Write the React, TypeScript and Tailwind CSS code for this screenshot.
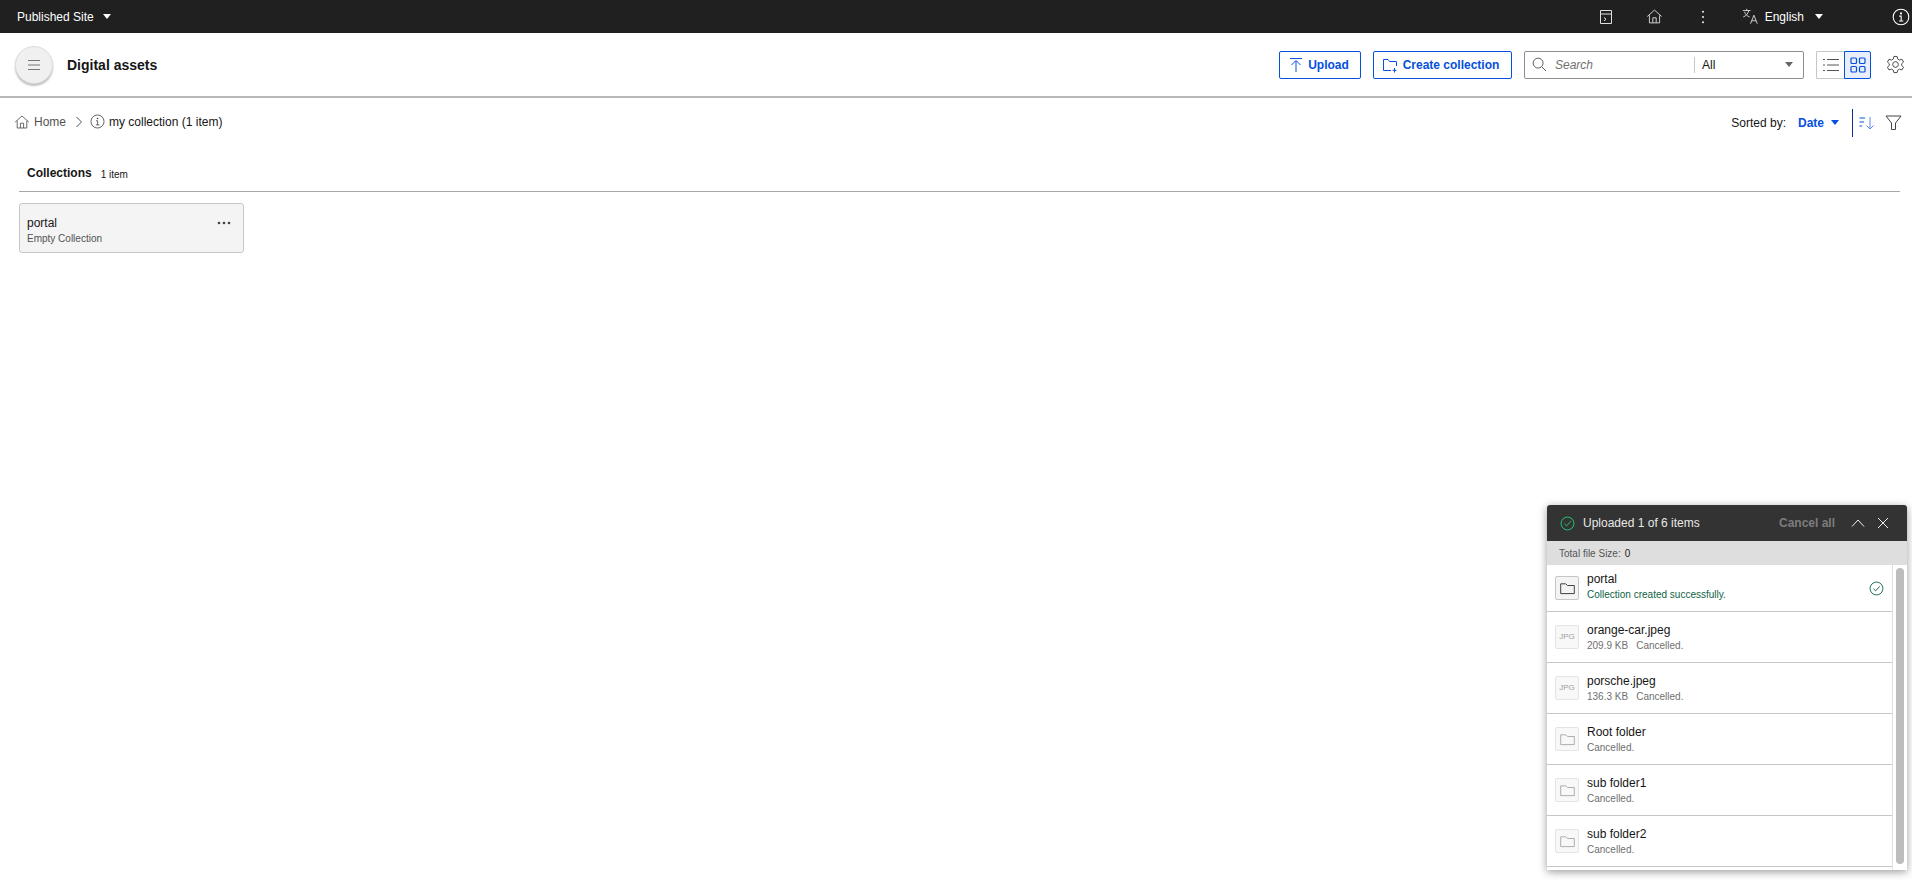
import React from "react";

const I = ({ className, children, box = "0 0 20 20", sw = 1 }: { className: string; children: React.ReactNode; box?: string; sw?: number }) => (
  <svg viewBox={box} className={className} fill="none" stroke="currentColor" strokeWidth={sw}>
    {children}
  </svg>
);

const HomeIcon = ({ className }: { className: string }) => (
  <I className={className}>
    <path d="M1.5 10 10 2.5 18.5 10M4 8.5V17.5H16V8.5M8 17.5V11.5H12V17.5" strokeLinejoin="round" />
  </I>
);
const InfoIcon = ({ className, sw = 1 }: { className: string; sw?: number }) => (
  <I className={className} sw={sw}>
    <circle cx="10" cy="10" r="8.7" />
    <path d="M8 9H10.2V14.5M7.8 14.5H12.5" />
    <circle cx="10" cy="6" r="0.6" fill="currentColor" />
  </I>
);
const Caret = ({ className }: { className: string }) => (
  <svg viewBox="0 0 8 5" className={className} fill="currentColor">
    <path d="M0 0H8L4 5Z" />
  </svg>
);
const Check = ({ className }: { className: string }) => (
  <I className={className} sw={1.2}>
    <circle cx="10" cy="10" r="8.6" />
    <path d="M5.8 10.3 8.8 13.2 14.4 7" />
  </I>
);
const Folder = ({ className }: { className: string }) => (
  <I className={className}>
    <path d="M2 4.5H8L10 6.5H18V16H2Z" strokeLinejoin="round" />
  </I>
);

const rows = [
  { name: "orange-car.jpeg", size: "209.9 KB", jpg: true },
  { name: "porsche.jpeg", size: "136.3 KB", jpg: true },
  { name: "Root folder" },
  { name: "sub folder1" },
  { name: "sub folder2" },
];

export default function App() {
  return (
    <div className="relative h-[882px] w-full overflow-hidden bg-white font-['Liberation_Sans',Arial,sans-serif] text-[#161616]">
      <header className="flex h-[33px] items-center bg-[#202020] pl-[17px] text-xs text-white">
        <span>Published Site</span>
        <Caret className="ml-[9px] h-[5px] w-[8px]" />
        <div className="ml-auto flex items-center">
          <I className="h-4 w-4 text-[#e0e0e0]" box="0 0 16 16">
            <path d="M2.5 1.5H13.5V14.5H2.5ZM2.5 5H13.5M6 8.5 8 10.2 6 12" />
          </I>
          <HomeIcon className="ml-[32px] h-[17px] w-[17px] text-[#e8e8e8]" />
          <svg viewBox="0 0 4 16" className="ml-[38px] h-[14px] w-[4px]" fill="#e8e8e8">
            <circle cx="2" cy="2" r="1.2" />
            <circle cx="2" cy="8" r="1.2" />
            <circle cx="2" cy="14" r="1.2" />
          </svg>
          <I className="ml-[37px] h-[17px] w-[17px] text-[#e8e8e8]" box="0 0 20 20" sw={1}>
            <path d="M1 3H10M5.5 1V3M8 3C7 7 4.500 9.500 1.500 10.500M3 4.500C4 7.500 6 9.500 9 10.500M10 18.500 14 8.500 18 18.500M11.500 15H16.500" />
          </I>
          <span className="ml-[6px]">English</span>
          <Caret className="ml-[11px] h-[5px] w-[8px]" />
          <InfoIcon className="mr-[2px] ml-[69px] h-[18px] w-[18px] text-white" sw={1.2} />
        </div>
      </header>

      <div className="flex h-[65px] items-center border-b-2 border-[#b8b8b8] pr-[7px] pl-[15px]">
        <button className="flex h-[38px] w-[38px] items-center justify-center rounded-full border border-[#dcdcdc] bg-[#f0f0f0] shadow-[0_2px_2px_rgba(0,0,0,0.25)]">
          <I className="h-[14px] w-[14px] text-[#777]" box="0 0 14 14">
            <path d="M1 2.500H13M1 7H13M1 11.500H13" />
          </I>
        </button>
        <h1 className="ml-[14px] text-sm font-bold">Digital assets</h1>
        <div className="ml-auto flex items-center">
          <button className="flex h-[28px] w-[82px] items-center justify-center gap-[5px] rounded-[2px] border border-[#0550dc] pr-[2px] text-xs font-bold text-[#0550dc]">
            <I className="h-[16px] w-[14px]" box="0 0 14 16">
              <path d="M1 1.500H13M7 15V4M2.500 8 7 3.500 11.500 8" />
            </I>
            Upload
          </button>
          <button className="ml-[12px] flex h-[28px] w-[139px] items-center justify-center gap-[5px] rounded-[2px] border border-[#0550dc] pr-[4px] text-xs font-bold text-[#0550dc]">
            <I className="h-[16px] w-[16px]" box="0 0 16 16">
              <path d="M9 13.500H1.500V2.500H6L7.500 4.500H14.500V9M12.500 11V15.500M10.500 13.300H14.500" />
            </I>
            Create collection
          </button>
          <div className="ml-[12px] flex h-[28px] w-[280px] items-center rounded-[2px] border border-[#8d8d8d] pr-[10px] pl-[7px]">
            <I className="h-[15px] w-[15px] text-[#555]" box="0 0 16 16">
              <circle cx="6.500" cy="6.500" r="5.300" />
              <path d="M10.500 10.500 15 15" />
            </I>
            <span className="ml-[8px] w-[139px] text-xs text-[#6f6f6f] italic">Search</span>
            <div className="h-[16px] w-px bg-[#c6c6c6]" />
            <span className="mt-[1px] ml-[7px] text-xs">All</span>
            <Caret className="ml-auto h-[5px] w-[8px] text-[#666]" />
          </div>
          <div className="ml-[12px] flex h-[28px] w-[55px]">
            <button className="flex w-[28px] items-center justify-center rounded-l-[2px] border border-r-0 border-[#c6c6c6]">
              <I className="h-[14px] w-[16px] text-[#555]" box="0 0 16 14">
                <path d="M4 1.500H16M4 7H16M4 12.500H16M0 1.500H2M0 7H2M0 12.500H2" />
              </I>
            </button>
            <button className="flex w-[27px] items-center justify-center rounded-r-[2px] border border-[#0550dc] bg-[#e8eefb]">
              <I className="h-[16px] w-[16px] text-[#0550dc]" box="0 0 16 16" sw={1.2}>
                <rect x="1" y="1" width="5.500" height="5.500" rx="1" />
                <rect x="9.500" y="1" width="5.500" height="5.500" rx="1" />
                <rect x="1" y="9.500" width="5.500" height="5.500" rx="1" />
                <rect x="9.500" y="9.500" width="5.500" height="5.500" rx="1" />
              </I>
            </button>
          </div>
          <I className="ml-[15px] h-[19px] w-[19px] text-[#444]">
            <path d="M8.300 1.500H11.700L12.300 4.200 14.200 5.300 16.800 4.500 18.500 7.400 16.500 9.200V11L18.500 12.800 16.800 15.700 14.200 14.900 12.300 16 11.700 18.500H8.300L7.700 16 5.800 14.900 3.200 15.700 1.500 12.800 3.500 11V9.200L1.500 7.400 3.200 4.500 5.800 5.300 7.700 4.200Z" strokeLinejoin="round" />
            <circle cx="10" cy="10" r="3" />
          </I>
        </div>
      </div>

      <div className="flex h-[43px] items-center pt-[4px] pr-[10px] pl-[14px] text-xs">
        <HomeIcon className="h-[16px] w-[16px] text-[#444]" />
        <span className="ml-[4px] text-[#525252]">Home</span>
        <I className="ml-[9px] h-[12px] w-[8px] text-[#555]" box="0 0 8 12">
          <path d="M1.500 1 6.500 6 1.500 11" />
        </I>
        <InfoIcon className="ml-[7px] h-[15px] w-[15px] text-[#333]" />
        <span className="ml-[4px]">my collection (1 item)</span>
        <div className="mt-[2px] ml-auto flex items-center">
          <span>Sorted by:</span>
          <span className="ml-[12px] font-bold text-[#0550dc]">Date</span>
          <Caret className="ml-[7px] h-[5px] w-[8px] text-[#0550dc]" />
          <div className="ml-[13px] h-[28px] w-px bg-[#0f2a9c]" />
          <I className="ml-[6px] h-[14px] w-[16px] text-[#0550dc]" box="0 0 16 14">
            <path d="M0.500 2H6M0.500 6H5M0.500 10H3" />
            <path d="M11 1V13M7.500 9.500 11 13 14.500 9.500" stroke="#5b8def" />
          </I>
          <I className="ml-[10px] h-[17px] w-[17px] text-[#444]" box="0 0 17 17">
            <path d="M1 2H16L10.500 9V15.500H6.500V9Z" strokeLinejoin="round" />
          </I>
        </div>
      </div>

      <section className="mt-[24px] mr-[12px] ml-[19px]">
        <div className="flex h-[27px] items-start border-b border-[#a8a8a8] pl-[8px]">
          <span className="text-xs font-bold">Collections</span>
          <span className="mt-[2px] ml-[9px] text-[10px]">1 item</span>
        </div>
        <div className="mt-[11px] h-[50px] w-[225px] rounded-[3px] border border-[#c6c6c6] bg-[#f4f4f4] pt-[12px] pl-[7px]">
          <div className="flex items-center pr-[12px]">
            <span className="text-xs leading-[14px]">portal</span>
            <svg viewBox="0 0 14 4" className="ml-auto h-[4px] w-[14px]" fill="#444">
              <circle cx="2" cy="2" r="1.300" />
              <circle cx="7" cy="2" r="1.300" />
              <circle cx="12" cy="2" r="1.300" />
            </svg>
          </div>
          <div className="mt-[3px] text-[10px] leading-[12px] text-[#525252]">Empty Collection</div>
        </div>
      </section>

      <aside className="absolute top-[505px] left-[1547px] w-[360px] rounded-t-[3px] bg-white shadow-[0_2px_8px_rgba(0,0,0,0.4)]">
        <div className="flex h-[36px] items-center rounded-t-[3px] bg-[#333333] pr-[18px] pl-[13px] text-white">
          <Check className="h-[15px] w-[15px] text-[#24d07a]" />
          <span className="ml-[8px] text-xs text-[#e8e8e8]">Uploaded 1 of 6 items</span>
          <span className="ml-auto text-xs font-bold text-[#7d7d7d]">Cancel all</span>
          <I className="ml-[16px] h-[12px] w-[14px] text-[#f0f0f0]" box="0 0 14 12">
            <path d="M1 9.500 7 3 13 9.500" />
          </I>
          <I className="ml-[12px] h-[12px] w-[12px] text-[#f0f0f0]" box="0 0 12 12">
            <path d="M1 1 11 11M11 1 1 11" />
          </I>
        </div>
        <div className="flex h-[24px] items-center bg-[#dedede] pl-[12px] text-[10px] text-[#555]">
          Total file Size:<span className="ml-[4px] text-[#222]">0</span>
        </div>
        <div className="flex h-[305px]">
          <div className="w-[345px] overflow-hidden">
            <div className="flex h-[47px] items-center border-b border-[#c6c6c6] pr-[8px] pl-[8px]">
              <div className="flex h-[24px] w-[24px] items-center justify-center rounded-[2px] border border-[#c6c6c6] bg-[#f4f4f4]">
                <Folder className="h-[17px] w-[17px] text-[#222]" />
              </div>
              <div className="mb-[3px] ml-[8px]">
                <div className="text-xs leading-[15px]">portal</div>
                <div className="mt-[2px] text-[10px] leading-[12px] text-[#0e6245]">Collection created successfully.</div>
              </div>
              <Check className="ml-auto h-[15px] w-[15px] text-[#0e6245]" />
            </div>
            {rows.map((r) => (
              <div key={r.name} className="flex h-[51px] items-center border-b border-[#c6c6c6] px-[8px]">
                <div className="flex h-[24px] w-[24px] items-center justify-center rounded-[2px] border border-[#e4e4e4] bg-[#f8f8f8]">
                  {r.jpg ? (
                    <span className="text-[8px] text-[#a0a0a0]">JPG</span>
                  ) : (
                    <Folder className="h-[17px] w-[17px] text-[#a0a0a0]" />
                  )}
                </div>
                <div className="ml-[8px]">
                  <div className="text-xs leading-[15px]">{r.name}</div>
                  <div className="mt-[2px] text-[10px] leading-[12px] text-[#6f6f6f]">
                    {r.size && <span className="mr-[8px]">{r.size}</span>}
                    Cancelled.
                  </div>
                </div>
              </div>
            ))}
          </div>
          <div className="flex-1 border-l border-[#e0e0e0] px-[3px] pt-[3px]">
            <div className="h-[296px] w-[8px] rounded-full bg-[#bdbdbd]" />
          </div>
        </div>
      </aside>
    </div>
  );
}
